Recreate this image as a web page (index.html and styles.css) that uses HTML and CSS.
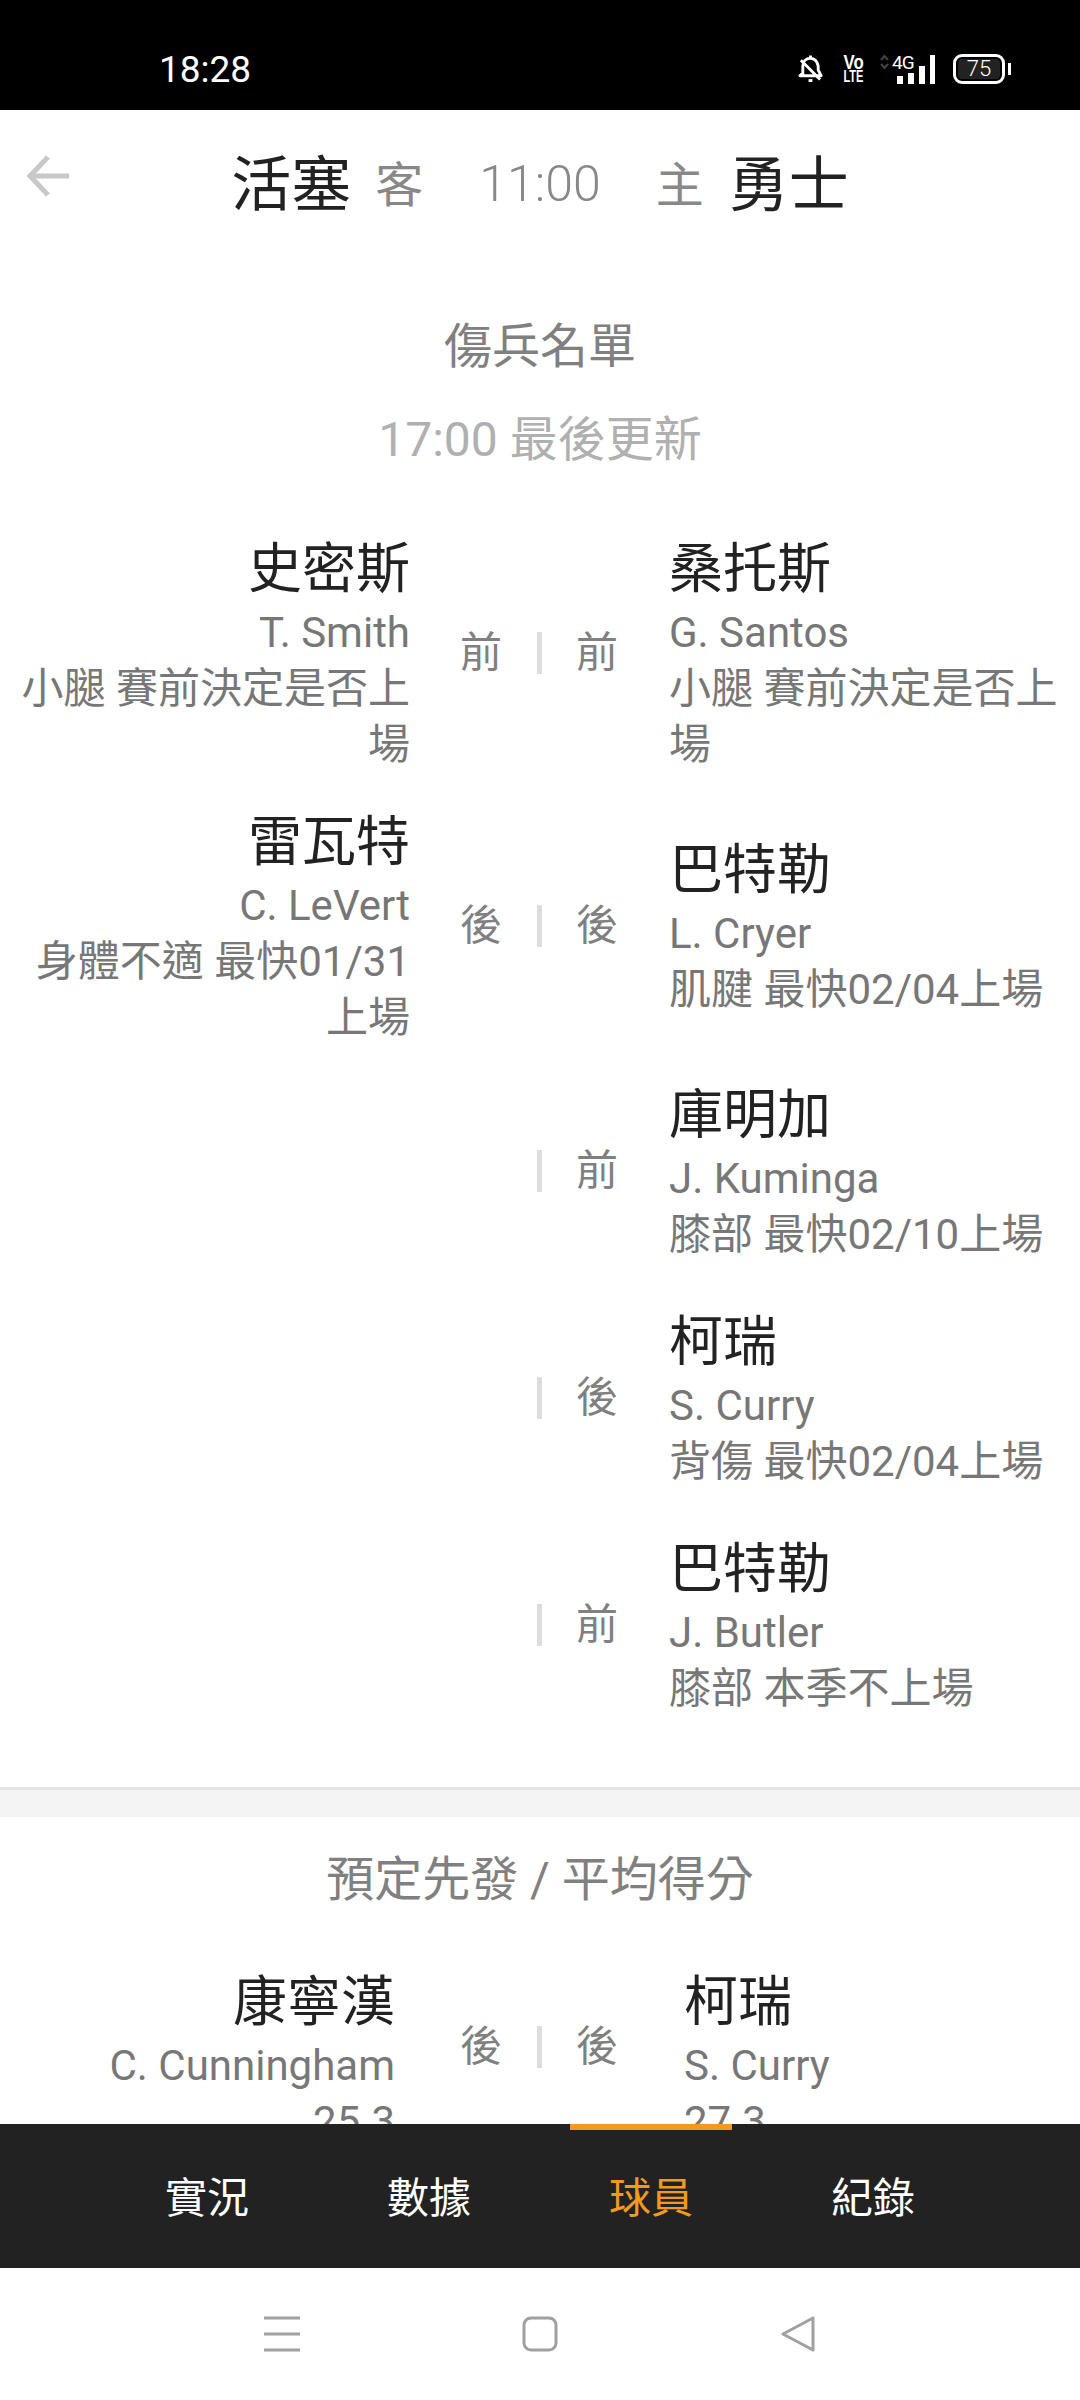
FILE: index.html
```html
<!DOCTYPE html>
<html lang="zh-Hant">

<head>
    <meta charset="UTF-8">
    <title>傷兵名單</title>
    <link rel="stylesheet" href="styles.css">
</head>

<body>
    <div class="status">
        <span class="clock">18:28</span>
        <div class="status-icons">
            <svg class="bell" width="25" height="30" viewBox="0 0 26 30" fill="none" stroke="#fff" stroke-width="3">
                <path d="M13 1v3M5 21V12c0-5 3-8 8-8s7 3 8 8v4l3 6H2l3-3" stroke-linejoin="round" />
                <path d="M3 6l20 20" />
                <path d="M11 27h4" />
            </svg>
            <div class="volte"><span>Vo</span><span class="lte">LTE</span></div>
            <div class="net">
                <svg class="updown" width="9" height="16" viewBox="0 0 9 16" fill="none" stroke="#444" stroke-width="2">
                    <path d="M1 6l3.500-4 3.500 4M1 10l3.500 4 3.500-4" />
                </svg>
                <span class="four-g">4G</span>
                <div class="bars">
                    <i class="b1"></i>
                    <i class="b2"></i>
                    <i class="b3"></i>
                    <i class="b4"></i>
                </div>
            </div>
            <div class="battery"><span>75</span></div>
            <i class="nib"></i>
        </div>
    </div>

    <div class="main">
        <div class="top">
            <svg class="back" width="42" height="42" viewBox="0 0 42 42" fill="none" stroke="#c8c8c8" stroke-width="5">
                <path d="M3 21h39M21 2L3 21l18 19" />
            </svg>
            <span class="team">活塞</span>
            <span class="side side-away">客</span>
            <span class="time">11:00</span>
            <span class="side side-home">主</span>
            <span class="team">勇士</span>
        </div>

        <h2 class="title">傷兵名單</h2>
        <p class="update">17:00 最後更新</p>

        <div class="list">
            <div class="row row-tall">
                <div class="player player-l">
                    <div class="cn">史密斯</div>
                    <div class="en">T. Smith</div>
                    <div class="en">小腿 賽前決定是否上場</div>
                </div>
                <div class="pos pos-l">前</div>
                <div class="bar"></div>
                <div class="pos pos-r">前</div>
                <div class="player player-r">
                    <div class="cn">桑托斯</div>
                    <div class="en">G. Santos</div>
                    <div class="en">小腿 賽前決定是否上場</div>
                </div>
            </div>
            <div class="row row-tall">
                <div class="player player-l">
                    <div class="cn">雷瓦特</div>
                    <div class="en">C. LeVert</div>
                    <div class="en">身體不適 最快01/31上場</div>
                </div>
                <div class="pos pos-l">後</div>
                <div class="bar"></div>
                <div class="pos pos-r">後</div>
                <div class="player player-r">
                    <div class="cn">巴特勒</div>
                    <div class="en">L. Cryer</div>
                    <div class="en">肌腱 最快02/04上場</div>
                </div>
            </div>
            <div class="row">
                <div class="player player-l"></div>
                <div class="pos pos-l"></div>
                <div class="bar"></div>
                <div class="pos pos-r">前</div>
                <div class="player player-r">
                    <div class="cn">庫明加</div>
                    <div class="en">J. Kuminga</div>
                    <div class="en">膝部 最快02/10上場</div>
                </div>
            </div>
            <div class="row">
                <div class="player player-l"></div>
                <div class="pos pos-l"></div>
                <div class="bar"></div>
                <div class="pos pos-r">後</div>
                <div class="player player-r">
                    <div class="cn">柯瑞</div>
                    <div class="en">S. Curry</div>
                    <div class="en">背傷 最快02/04上場</div>
                </div>
            </div>
            <div class="row">
                <div class="player player-l"></div>
                <div class="pos pos-l"></div>
                <div class="bar"></div>
                <div class="pos pos-r">前</div>
                <div class="player player-r">
                    <div class="cn">巴特勒</div>
                    <div class="en">J. Butler</div>
                    <div class="en">膝部 本季不上場</div>
                </div>
            </div>
        </div>

        <div class="divider"></div>

        <h2 class="title title-starter">預定先發 / 平均得分</h2>

        <div class="row row-starter">
            <div class="player player-l">
                <div class="cn">康寧漢</div>
                <div class="en">C. Cunningham</div>
                <div class="en">25.3</div>
            </div>
            <div class="pos pos-l">後</div>
            <div class="bar"></div>
            <div class="pos pos-r">後</div>
            <div class="player player-r">
                <div class="cn">柯瑞</div>
                <div class="en">S. Curry</div>
                <div class="en">27.3</div>
            </div>
        </div>
    </div>

    <div class="tabs">
        <div class="tab">實況</div>
        <div class="tab">數據</div>
        <div class="tab tab-on">球員</div>
        <div class="tab">紀錄</div>
    </div>

    <div class="sysbar">
        <svg width="36" height="36" viewBox="0 0 36 36" fill="none" stroke="#a0a0a0" stroke-width="3">
            <path d="M0 2h36M0 18h36M0 34h36" />
        </svg>
        <svg width="36" height="36" viewBox="0 0 36 36" fill="none" stroke="#a0a0a0" stroke-width="3">
            <rect x="2" y="2" width="32" height="32" rx="7" />
        </svg>
        <svg width="36" height="36" viewBox="0 0 36 36" fill="none" stroke="#a0a0a0" stroke-width="3" stroke-linejoin="round">
            <path d="M33 2v32L3 18z" />
        </svg>
    </div>
</body>

</html>
```

FILE: styles.css
```css
* {
    padding: 0;
    margin: 0;
    box-sizing: border-box;
}

body {
    width: 1080px;
    height: 2400px;
    overflow: hidden;
    background-color: #fff;
    font-family: Roboto, "Noto Sans CJK TC", sans-serif;
}

/* status bar */
.status {
    height: 110px;
    background-color: #000;
    color: #fff;
    display: flex;
    justify-content: space-between;
    align-items: center;
    padding: 0 69px 0 159px;
}

.clock {
    font-size: 37px;
    margin-top: 28px;
}

.status-icons {
    display: flex;
    align-items: flex-end;
    margin-top: 28px;
    height: 30px;
}

.volte {
    display: flex;
    flex-direction: column;
    align-items: center;
    width: 21px;
    margin-left: 20px;
    font-family: "Liberation Sans", sans-serif;
    font-size: 21px;
    font-weight: bold;
    line-height: 16px;
}

.volte span {
    transform: scaleX(0.8);
}

.volte .lte {
    font-size: 17px;
    line-height: 14px;
    transform: scaleX(0.65);
}

.net {
    position: relative;
    width: 55px;
    height: 30px;
    margin-left: 16px;
}

.updown {
    position: absolute;
    left: 0;
    top: 0;
}

.four-g {
    position: absolute;
    left: 12px;
    top: 0;
    font-size: 19px;
    line-height: 18px;
    letter-spacing: -1px;
}

.bars {
    position: absolute;
    left: 17px;
    right: 0;
    bottom: 0;
    height: 29px;
    display: flex;
    align-items: flex-end;
    gap: 5px;
}

.bars i {
    display: block;
    width: 6px;
    background-color: #fff;
}

.b1 {
    height: 8px;
}

.b2 {
    height: 11px;
}

.b3 {
    height: 18px;
}

.bars .b4 {
    width: 5px;
    height: 29px;
}

.battery {
    width: 52px;
    height: 30px;
    margin-left: 18px;
    padding: 2px;
    border: 3px solid #fff;
    border-radius: 9px;
    font-size: 22px;
    font-weight: 300;
    line-height: 20px;
    text-align: center;
}

.battery span {
    display: block;
    background-color: #222;
    border-radius: 4px;
}

.nib {
    display: block;
    width: 3px;
    height: 12px;
    margin: 0 0 9px 3px;
    background-color: #fff;
}

/* scrolling content */
.main {
    height: 2014px;
    overflow: hidden;
}

.top {
    position: relative;
    height: 148px;
    padding-bottom: 4px;
    display: flex;
    justify-content: center;
    align-items: center;
}

.back {
    position: absolute;
    left: 27px;
    top: 45px;
}

.team {
    margin-bottom: 6px;
    font-size: 60px;
    color: #222;
}

.side {
    margin-bottom: 3px;
    font-size: 48px;
    color: #888;
}

.side-away {
    margin-left: 24px;
    margin-right: 56px;
}

.side-home {
    margin-left: 55px;
    margin-right: 25px;
}

.time {
    margin-top: 3px;
    font-size: 50px;
    font-weight: 300;
    color: #888;
}

.title {
    margin-top: 57px;
    font-size: 48px;
    font-weight: normal;
    line-height: 64px;
    color: #808080;
    text-align: center;
}

.update {
    margin-top: 29px;
    font-size: 48px;
    line-height: 64px;
    color: #b0b0b0;
    text-align: center;
}

.list {
    margin-top: 60px;
}

.row {
    display: flex;
    align-items: center;
    min-height: 185px;
    margin-bottom: 42px;
    padding-left: 15px;
}

.row-tall {
    margin-bottom: 32px;
}

.player {
    width: 395px;
    flex-shrink: 0;
}

.player-l {
    text-align: right;
}

.player-r {
    margin-left: 53px;
}

.cn {
    margin-bottom: -3px;
    font-size: 54px;
    line-height: 76px;
    color: #222;
}

.en {
    font-size: 42px;
    line-height: 56px;
    color: #777;
}

.pos {
    width: 42px;
    font-size: 42px;
    line-height: 56px;
    color: #808080;
    text-align: center;
}

.pos-l {
    margin-left: 50px;
}

.pos-r {
    margin-right: -2px;
}

.bar {
    width: 5px;
    height: 42px;
    margin: 0 34px 0 35px;
    background-color: #ddd;
}

.divider {
    height: 30px;
    margin-top: 70px;
    border-top: 3px solid #e4e4e4;
    background-color: #f4f4f4;
}

.title-starter {
    margin-top: 31px;
}

.row-starter {
    align-items: flex-start;
    margin-top: 53px;
    margin-bottom: 0;
}

.row-starter .pos {
    margin-top: 54px;
}

.row-starter .bar {
    margin-top: 61px;
}

.row-starter .player-l {
    padding-right: 15px;
}

.row-starter .player-r {
    padding-left: 15px;
}

/* bottom tabs */
.tabs {
    height: 144px;
    padding: 0 96px;
    display: flex;
    background-color: #222;
    position: relative;
}

.tab {
    flex: 1;
    padding-top: 6px;
    font-size: 42px;
    line-height: 138px;
    color: #fff;
    text-align: center;
}

.tab-on {
    color: #f39a1e;
    position: relative;
}

.tab-on::before {
    content: "";
    position: absolute;
    left: 30px;
    top: 0;
    width: 162px;
    height: 6px;
    background-color: #f39a1e;
}

.sysbar {
    height: 132px;
    padding: 48px 264px 0;
    display: flex;
    justify-content: space-between;
    align-items: flex-start;
}
```
